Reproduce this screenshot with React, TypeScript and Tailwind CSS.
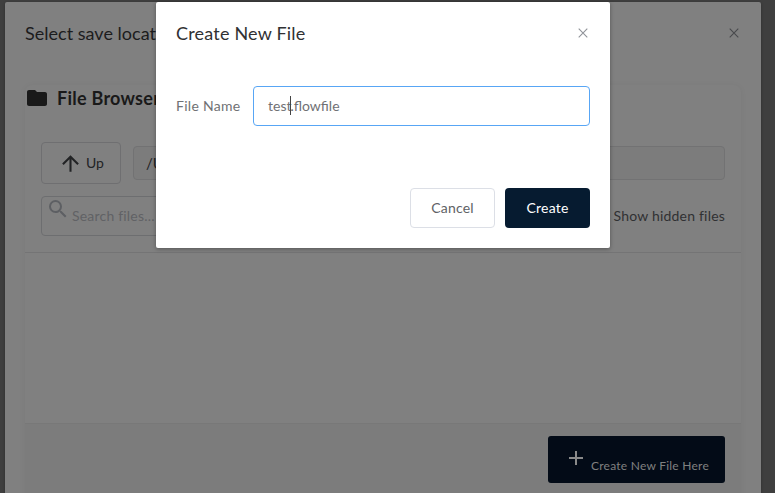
import type { ReactNode } from "react";

function Icon({ d, size, className = "" }: { d: string; size: number; className?: string }) {
  return (
    <svg width={size} height={size} viewBox="0 0 24 24" fill="currentColor" className={`shrink-0 ${className}`}>
      <path d={d} />
    </svg>
  );
}

function Close({ className = "" }: { className?: string }) {
  return (
    <svg width="10" height="10" viewBox="0 0 10 10" fill="none" stroke="currentColor" strokeWidth="1.1" className={`shrink-0 ${className}`}>
      <path d="M.7.7l8.6 8.6M9.3.7L.7 9.3" />
    </svg>
  );
}

function DialogHeader({ children, title, close }: { children: ReactNode; title: string; close: string }) {
  return (
    <header className="flex h-[62px] items-center justify-between pl-5">
      <h2 className={`whitespace-nowrap text-[18px] leading-6 ${title}`}>{children}</h2>
      <Close className={close} />
    </header>
  );
}

function FileBrowser() {
  return (
    <section className="mx-5 mt-[21px] flex h-[420px] flex-col rounded-t-lg shadow-[0_1px_6px_rgba(0,0,0,0.06)]">
      <div className="flex h-[26px] items-center gap-2 text-[#191919]">
        <Icon size={24} d="M10 4H4c-1.1 0-2 .9-2 2v12c0 1.1.9 2 2 2h16c1.1 0 2-.9 2-2V8c0-1.1-.9-2-2-2h-8l-2-2z" />
        <h3 className="whitespace-nowrap text-[18px] font-bold leading-6 tracking-[0.25px]">File Browser</h3>
      </div>
      <div className="mt-[31px] flex items-center gap-3 px-4 text-[14px]">
        <button className="flex h-[42px] w-20 items-center gap-[3px] rounded border border-[#6f6f71] pl-4 text-[#222325]">
          <Icon size={25} d="M4 12l1.41 1.41L11 7.83V20h2V7.83l5.58 5.59L20 12l-8-8-8 8z" />
          <span className="pb-[2px]">Up</span>
        </button>
        <div className="flex h-[34px] flex-1 items-center rounded border border-[#727273] bg-[#7c7c7c] pl-3 text-[15px] text-[#222325]">/Users</div>
      </div>
      <div className="mt-3 flex items-center justify-between px-4">
        <div className="flex h-10 w-[320px] rounded border border-[#6d6e70] pl-1 text-[#5d5f63]">
          <Icon size={24} d="M15.5 14h-.79l-.28-.27A6.471 6.471 0 0 0 16 9.5 6.5 6.5 0 1 0 9.5 16c1.61 0 3.09-.59 4.23-1.57l.27.28v.79l5 4.99L20.49 19l-4.99-5zm-6 0C7.01 14 5 11.99 5 9.5S7.01 5 9.5 5 14 7.01 14 9.5 11.99 14 9.5 14z" />
          <span className="ml-[2px] self-center pb-[2px] text-[14px] tracking-[0.2px] text-[#616265]">Search files...</span>
        </div>
        <span className="pb-[2px] text-[14px] tracking-[0.2px] text-[#303133]">Show hidden files</span>
      </div>
      <div className="mt-4 h-[171px] border-t border-[#747475]" />
      <div className="flex flex-1 items-start justify-end border-t border-[#787878] bg-[#7c7c7c] px-4 pt-3">
        <button className="flex h-[47px] w-[177px] items-center rounded-[3px] bg-[#030b17] pl-[16px] text-[#808080]">
          <Icon size={24} className="-mt-[3px] text-[#8a8a8a]" d="M19 13h-6v6h-2v-6H5v-2h6V5h2v6h6v2z" />
          <span className="ml-[3px] mt-[13px] whitespace-nowrap text-[12px] tracking-[0.24px]">Create New File Here</span>
        </button>
      </div>
    </section>
  );
}

function CreateDialog() {
  return (
    <div className="absolute left-[156px] top-[2px] h-[246px] w-[454px] rounded-[2px] bg-white shadow-[0_1px_4px_rgba(0,0,0,0.35)]">
      <div className="text-[#303133]">
        <DialogHeader title="tracking-[0.2px]" close="mr-[22px] text-[#909399]">Create New File</DialogHeader>
      </div>
      <div className="mt-[22px] flex items-center px-5 text-[14px] text-[#707174]">
        <label className="w-[77px] whitespace-nowrap pb-[2px] tracking-[0.28px]">File Name</label>
        <div className="flex h-10 flex-1 items-center rounded border border-[#58a6f5] pb-[2px] pl-[14px]">
          test<i className="-mx-px h-[19px] w-px bg-[#444]" />.flowfile
        </div>
      </div>
      <div className="mt-[62px] flex justify-end gap-[10px] px-5 text-[14px] tracking-[0.2px]">
        <button className="h-10 w-[85px] rounded border border-[#dcdfe6] pb-[2px] text-[#606266]">Cancel</button>
        <button className="h-10 w-[85px] rounded bg-[#061b30] pb-[2px] text-white">Create</button>
      </div>
    </div>
  );
}

export default function App() {
  return (
    <main className="relative h-[493px] w-[775px] overflow-hidden bg-[#3f3f3f] pl-[5px] pt-[2px] font-[Lato,sans-serif]">
      <div className="h-[491px] w-[756px] rounded-t-[2px] bg-[#808080] text-[#1c1c1d] shadow-[0_1px_3px_rgba(0,0,0,0.3)]">
        <DialogHeader title="tracking-[0.02px]" close="mr-[22px] text-[#48494c]">Select save location</DialogHeader>
        <FileBrowser />
      </div>
      <CreateDialog />
    </main>
  );
}
